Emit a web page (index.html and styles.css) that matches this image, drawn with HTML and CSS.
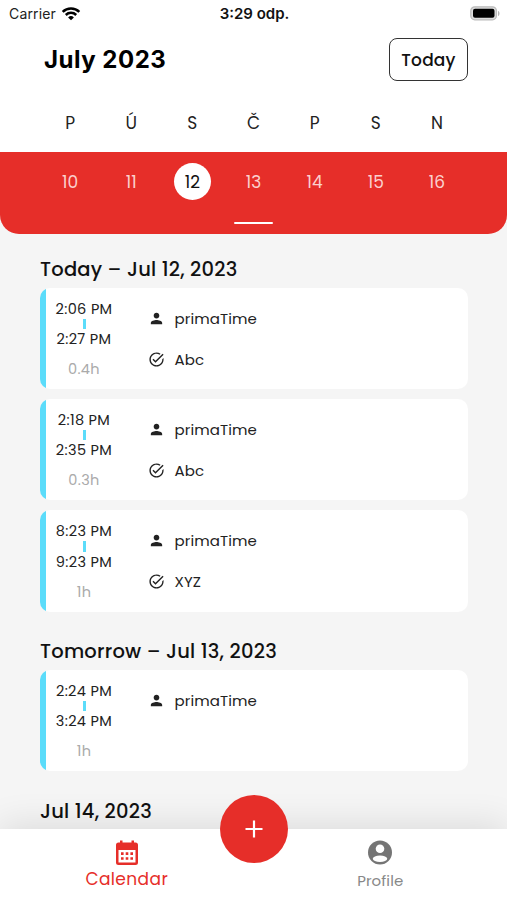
FILE: index.html
```html
<!DOCTYPE html>
<html lang="en">
<head>
    <meta charset="UTF-8">
    <meta name="viewport" content="width=device-width, initial-scale=1.0">
    <title>Calendar</title>
    <link rel="stylesheet" href="styles.css">
</head>
<body>

    <!-- Shared icons -->
    <svg class="icon-defs" width="0" height="0">
        <symbol id="icon-person" viewBox="0 0 24 24">
            <path d="M12 12c2.2 0 4-1.8 4-4s-1.8-4-4-4-4 1.8-4 4 1.8 4 4 4zm0 2c-2.7 0-8 1.3-8 4v2h16v-2c0-2.7-5.300-4-8-4z"/>
        </symbol>
        <symbol id="icon-check" viewBox="0 0 24 24">
            <path d="M22 5.180 10.590 16.600l-4.240-4.240 1.410-1.410 2.830 2.830 10-10L22 5.180zM12 20c-4.410 0-8-3.590-8-8s3.590-8 8-8c1.570 0 3.040.46 4.280 1.250l1.450-1.450A10.020 10.020 0 0 0 12 2C6.480 2 2 6.480 2 12s4.480 10 10 10 10-4.480 10-10c0-.7-.07-1.380-.21-2.030l-1.700 1.700c.01.110.01.220.01.330 0 4.410-3.690 8-8.100 8z"/>
        </symbol>
    </svg>

    <div class="app">
        <!-- Status bar -->
        <div class="status">
            <div class="carrier">
                <span>Carrier</span>
                <svg width="20" height="15" viewBox="0 0 20 15" fill="none" stroke="#000" stroke-width="2.5">
                    <path d="M1.700 5.800a11.800 11.800 0 0 1 16.600 0"/>
                    <path d="M4.800 9a7.400 7.400 0 0 1 10.400 0"/>
                    <path d="M7.100 11.400a4.100 4.100 0 0 1 5.800 0L10 14.300z" fill="#000" stroke="none"/>
                </svg>
            </div>
            <div class="clock">3:29 odp.</div>
            <svg class="battery" width="31" height="15" viewBox="0 0 31 15">
                <rect x="1.800" y=".8" width="25.600" height="13" rx="4" fill="#ddd" stroke="#bbb" stroke-width="1.300"/>
                <rect x="4" y="2.800" width="21.500" height="9" rx="2" fill="#000"/>
                <path d="M29 5v5c2-.6 2-4.400 0-5z" fill="#b5b5b5"/>
            </svg>
        </div>

        <!-- Month -->
        <header class="month">
            <h1>July 2023</h1>
            <button class="today">Today</button>
        </header>

        <!-- Week -->
        <div class="week weekdays">
            <span>P</span><span>Ú</span><span>S</span><span>Č</span><span>P</span><span>S</span><span>N</span>
        </div>
        <div class="strip">
            <div class="week">
                <span>10</span><span>11</span><span class="selected">12</span><span>13</span><span>14</span><span>15</span><span>16</span>
            </div>
            <div class="handle"></div>
        </div>

        <!-- Records -->
        <main class="agenda">
            <section>
                <h2>Today – Jul 12, 2023</h2>
                <article class="card">
                    <div class="times">
                        <span>2:06 PM</span>
                        <i class="dash"></i>
                        <span>2:27 PM</span>
                        <span class="total">0.4h</span>
                    </div>
                    <div class="info">
                        <p><svg><use href="#icon-person"/></svg>primaTime</p>
                        <p><svg><use href="#icon-check"/></svg>Abc</p>
                    </div>
                </article>
                <article class="card">
                    <div class="times">
                        <span>2:18 PM</span>
                        <i class="dash"></i>
                        <span>2:35 PM</span>
                        <span class="total">0.3h</span>
                    </div>
                    <div class="info">
                        <p><svg><use href="#icon-person"/></svg>primaTime</p>
                        <p><svg><use href="#icon-check"/></svg>Abc</p>
                    </div>
                </article>
                <article class="card">
                    <div class="times">
                        <span>8:23 PM</span>
                        <i class="dash"></i>
                        <span>9:23 PM</span>
                        <span class="total">1h</span>
                    </div>
                    <div class="info">
                        <p><svg><use href="#icon-person"/></svg>primaTime</p>
                        <p><svg><use href="#icon-check"/></svg>XYZ</p>
                    </div>
                </article>
            </section>
            <section>
                <h2>Tomorrow – Jul 13, 2023</h2>
                <article class="card">
                    <div class="times">
                        <span>2:24 PM</span>
                        <i class="dash"></i>
                        <span>3:24 PM</span>
                        <span class="total">1h</span>
                    </div>
                    <div class="info">
                        <p><svg><use href="#icon-person"/></svg>primaTime</p>
                    </div>
                </article>
            </section>
            <section>
                <h2>Jul 14, 2023</h2>
            </section>
        </main>

        <!-- Bottom navigation -->
        <nav class="tabs">
            <a class="tab active">
                <svg width="24" height="26" viewBox="0 0 24 26">
                    <path d="M3.500 2.500H5V.6h2.500v1.900h9V.6H19v1.900h1.500A2.500 2.500 0 0 1 23 5v17.500a2.500 2.500 0 0 1-2.500 2.500h-17A2.500 2.500 0 0 1 1 22.500V5a2.500 2.500 0 0 1 2.500-2.500z" fill="#e62e29"/>
                    <path d="M3.500 10h17v12.500h-17z" fill="#fff"/>
                    <path d="M6 12.300h2.600v2.600H6zm4.700 0h2.600v2.600h-2.600zm4.700 0H18v2.600h-2.600zM6 17.200h2.600v2.600H6zm4.700 0h2.600v2.600h-2.600zm4.700 0H18v2.600h-2.600z" fill="#e62e29"/>
                </svg>
                <span>Calendar</span>
            </a>
            <a class="tab">
                <svg width="24" height="26" viewBox="0 0 24 26">
                    <circle cx="12" cy="12.500" r="12" fill="#757575"/>
                    <circle cx="12" cy="8.800" r="4.300" fill="#fff"/>
                    <ellipse cx="12" cy="18.800" rx="7.200" ry="3.200" fill="#fff"/>
                </svg>
                <span>Profile</span>
            </a>
            <button class="add">
                <svg width="18" height="18" viewBox="0 0 18 18"><path d="M9 .5v17M.5 9h17" stroke="#fff" stroke-width="2.200"/></svg>
            </button>
        </nav>
    </div>

</body>
</html>
```

FILE: styles.css
```css
/* Global Styles */
* {
    margin: 0;
    padding: 0;
    box-sizing: border-box;
}

body {
    background: #f5f5f5;
    color: #111;
    font-family: Poppins, Inter, sans-serif;
}

.icon-defs {
    display: none;
}

.app {
    height: 900px;
    overflow: hidden;
    display: flex;
    flex-direction: column;
}

/* Status bar */
.status {
    height: 27px;
    padding: 0 7px 0 9px;
    background: #fff;
    display: grid;
    grid-template-columns: 1fr auto 1fr;
    align-items: center;
    font-family: Inter, sans-serif;
    font-size: 14px;
    flex-shrink: 0;
}

.carrier {
    display: flex;
    align-items: center;
    gap: 5px;
    color: #222;
    letter-spacing: 0.15px;
}

.carrier svg {
    margin-top: -1px;
}

.clock {
    font-weight: 600;
    font-size: 15px;
    color: #111;
}

.battery {
    justify-self: end;
}

/* Month */
.month {
    height: 67px;
    padding: 0 39px 2px 44px;
    background: #fff;
    display: flex;
    align-items: center;
    justify-content: space-between;
    flex-shrink: 0;
}

.month h1 {
    font-family: Inter, sans-serif;
    font-size: 24px;
    font-weight: 700;
    letter-spacing: 0.5px;
    color: #000;
}

.today {
    width: 79px;
    height: 43px;
    border: 1.5px solid #333;
    border-radius: 8px;
    background: #fff;
    color: #111;
    font-family: inherit;
    font-size: 17px;
    font-weight: 500;
    letter-spacing: 0.2px;
}

/* Week */
.week {
    display: grid;
    grid-template-columns: repeat(7, 1fr);
    padding: 0 39.5px;
    align-items: center;
    justify-items: center;
    font-size: 17px;
}

.weekdays {
    height: 58.4px;
    background: #fff;
    color: #222;
    flex-shrink: 0;
}

.strip {
    height: 82px;
    padding-top: 11px;
    background: #e62e29;
    border-radius: 0 0 19px 19px;
    color: #fbd0ce;
    flex-shrink: 0;
}

.selected {
    width: 37px;
    height: 37px;
    border-radius: 50%;
    background: #fff;
    color: #111;
    display: flex;
    align-items: center;
    justify-content: center;
}

.handle {
    width: 39px;
    height: 2.5px;
    margin: 21.5px auto 0;
    border-radius: 2px;
    background: #fff;
}

/* Records */
.agenda {
    flex: 1;
    min-height: 0;
    padding: 17.7px 39px 0 40px;
}

.agenda section {
    display: flex;
    flex-direction: column;
    gap: 10px;
    margin-bottom: 22.4px;
}

.agenda h2 {
    height: 36px;
    margin-bottom: -10px;
    line-height: 35px;
    font-size: 19.5px;
    font-weight: 500;
    letter-spacing: 0.22px;
    white-space: nowrap;
}

.card {
    height: 101.2px;
    padding-left: 6px;
    border-radius: 10px;
    background: linear-gradient(to right, #5bdcfa 6px, #fff 6px);
    display: flex;
}

.times {
    width: 76px;
    padding-top: 10.6px;
    display: flex;
    flex-direction: column;
    align-items: center;
    font-size: 14.5px;
    line-height: 20px;
    letter-spacing: 0.35px;
    color: #222;
}

.dash {
    width: 3px;
    height: 10.5px;
    background: #5bdcfa;
}

.times .total {
    margin-top: 10px;
    color: #aaa;
}

.info {
    padding: 18.5px 0 0 26px;
    display: flex;
    flex-direction: column;
    gap: 17px;
    font-size: 15px;
    letter-spacing: 0.1px;
    color: #222;
}

.info p {
    height: 24px;
    display: flex;
    align-items: center;
    gap: 9.5px;
}

.info svg {
    width: 17px;
    height: 17px;
    fill: #222;
}

/* Bottom navigation */
.tabs {
    position: relative;
    height: 71px;
    background: #fff;
    box-shadow: 0 -4px 36px rgba(0, 0, 0, 0.11);
    display: grid;
    grid-template-columns: 1fr 1fr;
    flex-shrink: 0;
}

.tab {
    padding-top: 11px;
    display: flex;
    flex-direction: column;
    align-items: center;
    color: #888;
    font-size: 15px;
    line-height: 30px;
    letter-spacing: 0.1px;
}

.active {
    color: #e62e29;
    font-size: 17px;
    line-height: 27px;
    letter-spacing: 0.4px;
}

.add {
    position: absolute;
    left: 50%;
    top: -34px;
    width: 68px;
    height: 68px;
    margin-left: -34px;
    border: none;
    border-radius: 50%;
    background: #e62e29;
    display: flex;
    align-items: center;
    justify-content: center;
}
```
